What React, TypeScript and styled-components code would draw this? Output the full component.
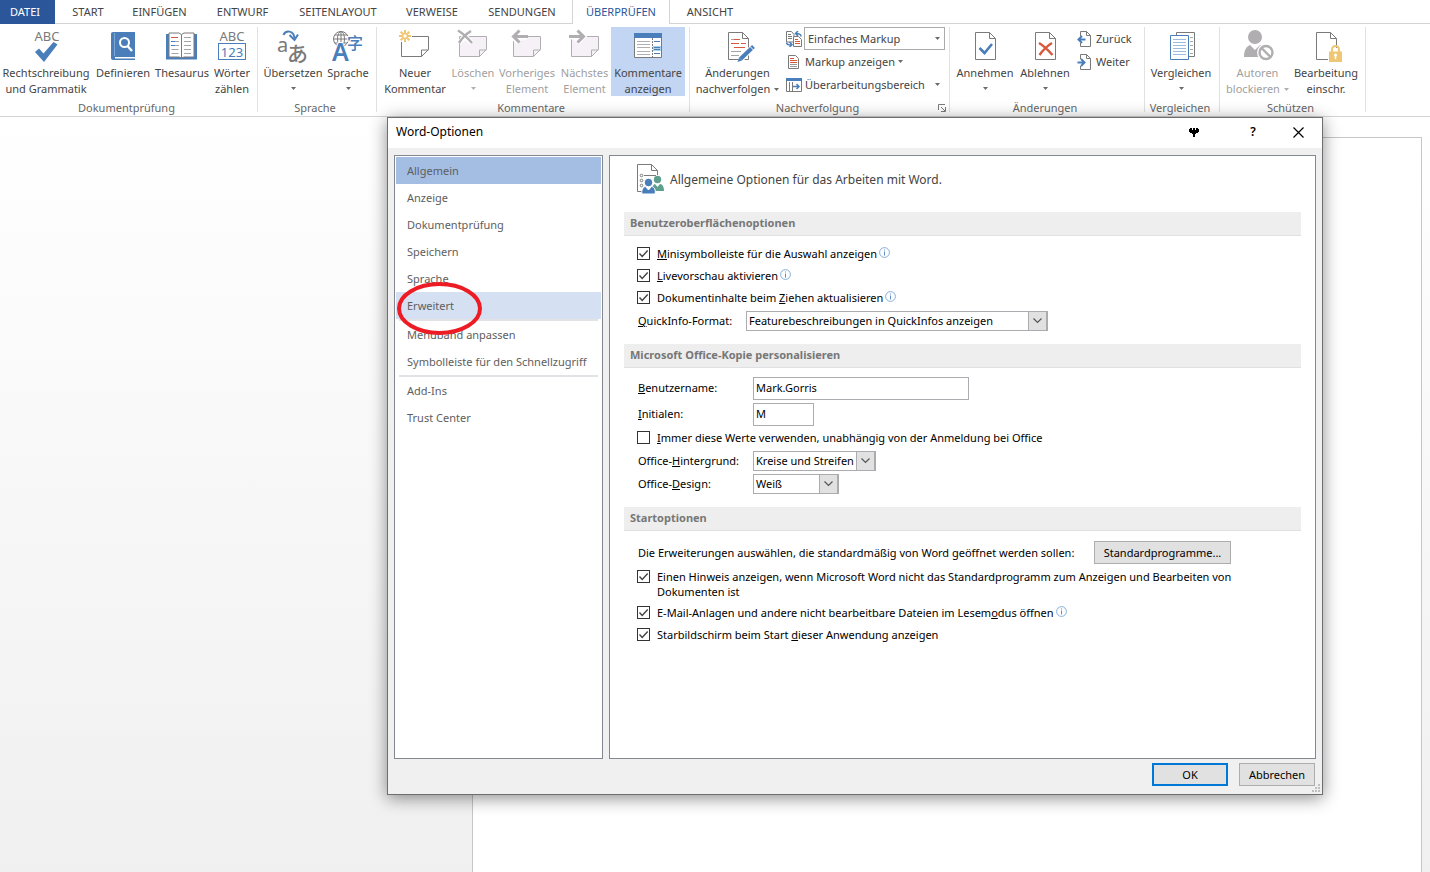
import React, { useId } from "react";
import styled, { createGlobalStyle } from "styled-components";

const BLUE = "#4a7ebb";
const GREY = "#7a7a7a";
const RED = "#d9583b";
const PALE = "#b0aeb0";
const GOLD = "#efc674";

const GlobalStyle = createGlobalStyle`
  *, *::before, *::after { box-sizing: border-box; }
  body {
    margin: 0;
    background: #fff;
    color: #444;
    font: 11px/16px "Noto Sans", "Open Sans", sans-serif;
  }
  button, input, select { font: inherit; color: inherit; margin: 0; }
`;

/* ---------- shell ---------- */

const Screen = styled.div`
  position: relative;
  display: flex;
  flex-direction: column;
  min-height: 100vh;
  overflow: hidden;
`;

const TabBar = styled.nav`
  display: flex;
  height: 24px;
  border-bottom: 1px solid #d4d4d4;
`;

const Tab = styled.button<{ $width: number; $kind?: "file" | "active" }>`
  flex: none;
  width: ${(p) => p.$width}px;
  height: 24px;
  padding: 0 0 1px;
  border: 0;
  white-space: nowrap;
  background: ${(p) => (p.$kind === "file" ? "#2b579a" : p.$kind === "active" ? "#fff" : "transparent")};
  color: ${(p) => (p.$kind === "file" ? "#fff" : p.$kind === "active" ? "#2b579a" : "#444")};
  ${(p) => p.$kind === "file" && "margin-right: 3px; padding-right: 5px;"}
  ${(p) => p.$kind === "active" && "border: solid #d4d4d4; border-width: 0 1px;"}
`;

const Ribbon = styled.div`
  display: flex;
  height: 93px;
  padding: 3px 0 4px;
  border-bottom: 1px solid #d4d4d4;
`;

const Group = styled.section<{ $width: number; $pad?: number }>`
  flex: none;
  display: flex;
  flex-direction: column;
  justify-content: space-between;
  width: ${(p) => p.$width}px;
  padding-left: ${(p) => p.$pad ?? 0}px;
  border-right: 1px solid #e1e1e1;
`;

const GroupItems = styled.div`
  display: flex;
`;

const GroupLabel = styled.div<{ $pad?: number }>`
  position: relative;
  margin-left: -${(p) => p.$pad ?? 0}px;
  padding-right: 4px;
  line-height: 8px;
  text-align: center;
  color: #666;
`;

const Launcher = styled.button`
  position: absolute;
  right: 3px;
  bottom: 0;
  display: flex;
  padding: 0;
  border: 0;
  background: none;
`;

const BigButton = styled.button<{ $width: number; $on?: boolean }>`
  flex: none;
  display: flex;
  flex-direction: column;
  align-items: center;
  width: ${(p) => p.$width}px;
  height: 69px;
  padding: 2px 0 0;
  border: 0;
  background: ${(p) => (p.$on ? "#c2d5f2" : "transparent")};
  color: #444;
  white-space: nowrap;
  &:disabled { color: #a0a0a0; }
  > svg { flex: none; margin-bottom: 2px; }
`;

const Line = styled.span`
  display: flex;
  align-items: center;
  gap: 4px;
  height: 16px;
`;

const SmallStack = styled.div<{ $left: number }>`
  display: flex;
  flex-direction: column;
  padding-left: ${(p) => p.$left}px;
`;

const SmallRow = styled.div`
  display: flex;
  align-items: center;
  gap: 2px;
  height: 23px;
`;

const SmallButton = styled.button<{ $width?: number }>`
  display: flex;
  align-items: center;
  gap: 3px;
  height: 23px;
  width: ${(p) => (p.$width ? `${p.$width}px` : "auto")};
  padding: 0;
  border: 0;
  background: none;
  white-space: nowrap;
  > svg { flex: none; }
  > svg:last-child:not(:first-child) { margin-left: ${(p) => (p.$width ? "auto" : "0")}; }
`;

const RibbonCombo = styled.span`
  display: grid;
  align-items: center;
  width: 141px;
  > * { grid-area: 1 / 1; }
  > svg { justify-self: end; margin-right: 5px; pointer-events: none; }
  select {
    appearance: none;
    width: 100%;
    height: 23px;
    padding: 0 16px 0 3px;
    border: 1px solid #ababab;
    border-radius: 0;
    background: #fff;
  }
`;

const Workspace = styled.main`
  flex: 1;
  display: flex;
  padding: 20px 8px 0 472px;
  background: linear-gradient(#fff, #f0f0f0);
`;

const Sheet = styled.div`
  flex: 1;
  border: 1px solid #c6c6c6;
  border-bottom: 0;
  background: #fff;
`;

/* ---------- dialog ---------- */

const Dialog = styled.section`
  position: absolute;
  left: 387px;
  top: 117px;
  display: flex;
  flex-direction: column;
  width: 936px;
  border: 1px solid #6e6e72;
  background: #f0f0f0;
  color: #000;
  box-shadow: 0 3px 16px rgba(0, 0, 0, 0.45);
`;

const TitleBar = styled.header`
  display: flex;
  align-items: center;
  height: 30px;
  padding: 0 17px 2px 8px;
  background: #fff;
  h1 { flex: 1; margin: 0; font-size: 12px; font-weight: 400; }
`;

const TitleButton = styled.button<{ $gap?: number }>`
  display: flex;
  justify-content: center;
  width: 14px;
  margin-left: ${(p) => p.$gap ?? 0}px;
  padding: 0;
  border: 0;
  background: none;
  font-size: 12px;
  font-weight: 600;
`;

const Panels = styled.div`
  display: flex;
  gap: 6px;
  padding: 7px 6px 4px;
`;

const Categories = styled.nav`
  flex: none;
  width: 209px;
  height: 604px;
  padding: 1px;
  border: 1px solid #828790;
  background: #fff;
`;

const Category = styled.button<{ $state?: "selected" | "hover" }>`
  display: block;
  width: 100%;
  height: 27px;
  padding: 0 0 0 11px;
  border: 0;
  text-align: left;
  white-space: nowrap;
  color: #5e5e5e;
  background: ${(p) => (p.$state === "selected" ? "#a3bde3" : p.$state === "hover" ? "#d5e1f2" : "#fff")};
`;

const Separator = styled.hr`
  height: 2px;
  margin: 0 3px;
  border: 0;
  background: #e1e1e6;
`;

const Content = styled.div`
  flex: 1;
  min-width: 0;
  padding: 8px 14px 0;
  border: 1px solid #828790;
  background: #fff;
`;

const Intro = styled.div`
  display: flex;
  align-items: center;
  gap: 5px;
  height: 31px;
  margin: 0 0 17px 13px;
  font-size: 12px;
  color: #444;
`;

const SectionTitle = styled.h2`
  height: 24px;
  margin: 0;
  padding-left: 6px;
  border-bottom: 1px solid #e1e1e4;
  background: #eee;
  color: #777;
  font-size: 11px;
  font-weight: 700;
  line-height: 22px;
`;

const Fields = styled.div<{ $top: number; $bottom?: number }>`
  padding: ${(p) => p.$top}px 0 ${(p) => p.$bottom ?? 0}px 13px;
`;

const CheckLabel = styled.label<{ $height: number; $top?: number }>`
  display: flex;
  align-items: flex-start;
  gap: 7px;
  height: ${(p) => p.$height}px;
  padding-top: ${(p) => p.$top ?? 0}px;
  line-height: 15px;
`;

const Box = styled.span`
  flex: none;
  display: grid;
  width: 13px;
  height: 13px;
  margin-top: 1px;
  > * { grid-area: 1 / 1; }
  input {
    appearance: none;
    width: 13px;
    height: 13px;
    border: 1px solid #333;
    background: #fff;
  }
  svg { visibility: hidden; pointer-events: none; }
  input:checked + svg { visibility: visible; }
`;

const CheckText = styled.span`
  max-width: 600px;
  > svg { margin-left: 2px; }
`;

const FieldRow = styled.div<{ $height: number; $label: number }>`
  display: flex;
  align-items: center;
  height: ${(p) => p.$height}px;
  padding-left: 1px;
  white-space: nowrap;
  > label { flex: none; width: ${(p) => p.$label}px; }
`;

const TextInput = styled.input<{ $width: number }>`
  width: ${(p) => p.$width}px;
  height: 23px;
  padding: 0 2px 2px;
  border: 1px solid #ababb0;
  background: #fff;
`;

const Combo = styled.span<{ $width: number }>`
  display: grid;
  width: ${(p) => p.$width}px;
  > * { grid-area: 1 / 1; }
  select {
    appearance: none;
    width: 100%;
    height: 20px;
    padding: 0 20px 0 2px;
    border: 1px solid #ababb0;
    border-radius: 0;
    background: #fff;
  }
`;

const ComboArrow = styled.span`
  display: flex;
  align-items: center;
  justify-content: center;
  justify-self: end;
  width: 20px;
  height: 20px;
  border: 1px solid #ababb0;
  border-right-width: 2px;
  background: #e1e1e1;
  pointer-events: none;
`;

const PushButton = styled.button<{ $width: number; $primary?: boolean }>`
  width: ${(p) => p.$width}px;
  height: 23px;
  padding: 0;
  border: ${(p) => (p.$primary ? "2px solid #0078d7" : "1px solid #adadad")};
  background: #e1e1e1;
  white-space: nowrap;
`;

const ExtensionRow = styled.div`
  display: flex;
  align-items: center;
  gap: 14px;
  height: 23px;
  margin-bottom: 5px;
  padding-left: 1px;
  white-space: nowrap;
  > span { width: 442px; }
`;

const Footer = styled.footer`
  display: flex;
  justify-content: flex-end;
  gap: 11px;
  height: 31px;
  padding-right: 7px;
`;

const Grip = styled.svg`
  position: absolute;
  right: 2px;
  bottom: 2px;
`;

const Marker = styled.svg`
  position: absolute;
  left: 8px;
  top: 162px;
  pointer-events: none;
`;

/* ---------- icons ---------- */

const Big = ({ children }: { children: React.ReactNode }) => (
  <svg width="32" height="34" viewBox="0 0 32 34" fill="none" overflow="visible" aria-hidden="true">
    {children}
  </svg>
);
const Small = ({ children }: { children: React.ReactNode }) => (
  <svg width="16" height="16" viewBox="0 0 16 16" fill="none" aria-hidden="true">
    {children}
  </svg>
);
const Caret = ({ pale }: { pale?: boolean }) => (
  <svg width="5" height="3" viewBox="0 0 5 3" aria-hidden="true">
    <path d="M0 0h5L2.5 3z" fill={pale ? PALE : "#6a6a6a"} />
  </svg>
);

const SpellIcon = () => (
  <Big>
    <text x="17" y="12" textAnchor="middle" fontSize="13" fill={GREY}>ABC</text>
    <path d="M5 23l4-3.500 4.500 5L23.500 13l4 2.500-13.500 17.500z" fill={BLUE} />
  </Big>
);
const DefineIcon = () => (
  <Big>
    <path d="M6 3h22v25H8v1.500h20V31H6c-1.200 0-2-.8-2-2V5c0-1.200.8-2 2-2z" fill={BLUE} />
    <path d="M7.500 4v23" stroke="#7fa5d2" />
    <circle cx="17.500" cy="13.500" r="4.500" stroke="#fff" strokeWidth="2" />
    <path d="M20.500 17l4.500 5" stroke="#fff" strokeWidth="2.500" />
  </Big>
);
const ThesaurusIcon = () => (
  <Big>
    <path d="M0 5h31v25.500H0z" fill={BLUE} />
    <path d="M3 4h10l2.500 1.500L18 4h10v24H18l-2.500 1L13 28H3z" fill="#fff" stroke={GREY} />
    <path d="M15.500 6v23" stroke={GREY} />
    <path d="M18 8.500h7M18 12.500h7M18 16.500h7M18 20.500h7M18 24.500h7M5.500 20.500h7M5.500 24.500h7M9 12.500h4M9 16.500h4" stroke="#a5a5a5" />
    <path d="M5 8.500h7" stroke={RED} />
    <path d="M5 12.500h4M5 16.500h4" stroke={BLUE} />
  </Big>
);
const CountIcon = () => (
  <Big>
    <text x="16" y="12" textAnchor="middle" fontSize="13" fill={GREY}>ABC</text>
    <rect x="2.500" y="14.500" width="27" height="16" stroke={BLUE} />
    <text x="16" y="28" textAnchor="middle" fontSize="13" fill={BLUE}>123</text>
  </Big>
);
const TranslateIcon = () => (
  <Big>
    <text x="0" y="23" fontSize="20" fill={GREY}>a</text>
    <text x="10" y="32" fontSize="21" fontWeight="500" fill={GREY} fontFamily="Noto Sans CJK JP, sans-serif">あ</text>
    <path d="M6.500 6c2-5 10-5 11 3" stroke={BLUE} strokeWidth="2" />
    <path d="M12.500 6l5 5 3.500-5.500" stroke={BLUE} strokeWidth="2" />
  </Big>
);
const LanguageIcon = () => (
  <Big>
    <circle cx="9" cy="10" r="7.500" stroke={GREY} />
    <ellipse cx="9" cy="10" rx="3.500" ry="7.500" stroke={GREY} />
    <path d="M1.500 10h15M3 6h12M3 14h12M9 2.500v15" stroke={GREY} />
    <text x="0" y="32" fontSize="25" fontWeight="600" fill={BLUE} stroke="#fff" strokeWidth="2" paintOrder="stroke">A</text>
    <text x="15" y="20" fontSize="16" fontWeight="500" fill={BLUE} fontFamily="Noto Sans CJK SC, sans-serif" stroke="#fff" strokeWidth="2" paintOrder="stroke">字</text>
  </Big>
);
const Note = ({ pale }: { pale?: boolean }) => (
  <path
    d="M2.500 7.500h27v13l-7 7h-20zM22.500 27.500v-6.500h7"
    fill={pale ? "#f5f1f7" : "#fff"}
    stroke={pale ? PALE : GREY}
  />
);
const NewNoteIcon = () => (
  <Big>
    <Note />
    <path d="M0 0h13v13H0z" fill="#fff" />
    <circle cx="6" cy="7" r="2.500" stroke={GOLD} strokeWidth="1.500" />
    <path d="M6 1v3M6 10v3M0 7h3M9 7h3M1.700 2.700l2 2M8.300 9.300l2 2M10.300 2.700l-2 2M3.700 9.300l-2 2" stroke={GOLD} strokeWidth="2" />
  </Big>
);
const DeleteNoteIcon = () => (
  <Big>
    <Note pale />
    <path d="M1 1.500l14 12.500M14 2L2 14" stroke="#fff" strokeWidth="5" />
    <path d="M1 1.500c5 3 10 8 14 12.500M14 2C9 5 5 9 2 14" stroke={PALE} strokeWidth="2.500" />
  </Big>
);
const PrevNoteIcon = () => (
  <Big>
    <Note pale />
    <path d="M2 7.500h14M8 1.500l-6 6 6 6" stroke="#fff" strokeWidth="6" />
    <path d="M2.500 7.500H17M8.500 1.500l-6 6 6 6" stroke={PALE} strokeWidth="3" />
  </Big>
);
const NextNoteIcon = () => (
  <Big>
    <Note pale />
    <path d="M0 7.500h14M8 1.500l6 6-6 6" stroke="#fff" strokeWidth="6" />
    <path d="M0 7.500h14.500M8.500 1.500l6 6-6 6" stroke={PALE} strokeWidth="3" />
  </Big>
);
const ShowNotesIcon = () => (
  <Big>
    <path d="M2.500 5h27v23.500h-27z" fill="#fff" stroke={GREY} />
    <path d="M2 4h28v5H2z" fill={BLUE} />
    <path d="M5 12.500h13M5 15.500h13M5 18.500h13M5 22.500h13M5 25.500h13" stroke="#b0b0b0" />
    <path d="M20.500 9v19" stroke={GREY} strokeDasharray="2 1" />
    <path d="M21 17h8v5h-8z" fill="#a9d3ea" />
    <path d="M22 12.500h6M22 18.500h6M22 20.500h6M22 24.500h6" stroke={BLUE} />
  </Big>
);
const PageShape = () => (
  <path d="M6.500 3.500h14l6 6v21h-20zM20.500 3.500v6h6" fill="#fff" stroke={GREY} />
);
const TrackIcon = () => (
  <Big>
    <PageShape />
    <path d="M9 10.500h7M9 22.500h10M9 26.500h8" stroke="#a5a5a5" />
    <path d="M12 10.500h6M9 14.500h8M19 14.500h5M12 18.500h4M16 18.500h7" stroke={RED} />
    <path d="M32.500 16.500L17.500 31.500" stroke="#fff" strokeWidth="6" />
    <path d="M31.500 17.500L18.500 30" stroke={BLUE} strokeWidth="4" />
    <path d="M28 17.500l3.500 3.500" stroke="#fff" />
    <path d="M17 28.500l3 3-4.500 1.500z" fill={BLUE} />
  </Big>
);
const AcceptIcon = () => (
  <Big>
    <PageShape />
    <path d="M10.500 19l5 5 7.500-9" stroke={BLUE} strokeWidth="2.600" />
  </Big>
);
const RejectIcon = () => (
  <Big>
    <PageShape />
    <path d="M10 14c5 3 9 7 13.500 12M23 14c-5 3-9 7-12.500 12" stroke={RED} strokeWidth="2.400" />
  </Big>
);
const CompareIcon = () => (
  <Big>
    <path d="M11.500 3.500h18v24h-18z" fill="#fff" stroke={GREY} />
    <path d="M25 8.500h3M25 12.500h3M25 16.500h3M25 20.500h3M25 24.500h3" stroke="#a5a5a5" />
    <path d="M5.500 6.500h18v24h-18z" fill="#fff" stroke={BLUE} />
    <path d="M8 10.500h13M8 13.500h13M8 16.500h13M8 19.500h13M8 22.500h13M8 25.500h13" stroke="#9dbbdd" />
  </Big>
);
const BlockIcon = () => (
  <Big>
    <circle cx="13" cy="8" r="7" fill={PALE} />
    <path d="M2 28c0-7 2-10 6-12l5 5 5-5c4 2 6 5 6 12z" fill={PALE} />
    <circle cx="24" cy="23.500" r="9" fill="#fff" />
    <circle cx="24" cy="23.500" r="6.500" stroke={PALE} strokeWidth="2.400" />
    <path d="M19.500 19l9 9" stroke={PALE} strokeWidth="2.400" />
  </Big>
);
const RestrictIcon = () => (
  <Big>
    <PageShape />
    <path d="M18 19h15v14H18z" fill="#fff" />
    <path d="M22 23v-2.500a3.500 3.500 0 0 1 7 0V23" stroke={GOLD} strokeWidth="2" />
    <path d="M19 22.500h13V33H19z" fill={GOLD} />
    <path d="M25.500 25.500v4.500" stroke="#fff" strokeWidth="1.500" />
    <circle cx="25.500" cy="26" r="1.500" fill="#fff" />
  </Big>
);
const SwapIcon = () => (
  <Small>
    <path d="M.5.500h5l2.500 3v7.500H.5zM2 3.500h3M2 5.500h4M2 7.500h4" stroke={GREY} />
    <path d="M7.500 5.500h5l3 3v7h-8z" fill="#fff" stroke={GREY} />
    <path d="M9 8.500h3M9 10.500h5M9 12.500h5" stroke={RED} />
    <path d="M15 5.500c0-2-2-3-5-3M12 0L9.500 2.500 12 5M.5 11.500c0 2 2 2.500 4.500 2.500M3.500 11L6 13.700 3.500 16" stroke={BLUE} strokeWidth="1.500" />
  </Small>
);
const ListIcon = () => (
  <Small>
    <path d="M2.500 1.500h7l3 3v10h-10z" stroke={GREY} />
    <path d="M4 4.500h4M4 6.500h7M4 8.500h7" stroke={RED} />
    <path d="M4 10.500h7M4 12.500h7" stroke="#999" />
  </Small>
);
const PaneIcon = () => (
  <Small>
    <path d="M.5 2.500h15v12H.5z" stroke={GREY} />
    <path d="M0 1h16v3H0z" fill={BLUE} />
    <path d="M3.500 5v9" stroke={RED} />
    <path d="M6.500 5v9" stroke={GREY} />
    <path d="M7 9.500h6M10.500 7l2.500 2.500-2.500 2.500" stroke={BLUE} strokeWidth="1.500" />
  </Small>
);
const StepIcon = ({ back }: { back?: boolean }) => (
  <Small>
    <path d="M3.500 5V.5h6l4 4v11h-10V12M9.500.500v4h4" stroke={GREY} />
    {back ? (
      <path d="M1.500 8.500h7M5 5l-3.500 3.500L5 12" stroke={BLUE} strokeWidth="2" />
    ) : (
      <path d="M.5 8.500h7M4 5l3.500 3.500L4 12" stroke={BLUE} strokeWidth="2" />
    )}
  </Small>
);
const InfoIcon = () => (
  <svg width="11" height="11" viewBox="0 0 11 11" fill="none" role="img" aria-label="Info">
    <circle cx="5.500" cy="5.500" r="4.900" stroke="#86aedb" />
    <path d="M5.500 4.500v4M5.500 2.500v1" stroke="#5d8fcb" />
  </svg>
);
const PeopleIcon = () => (
  <svg width="28" height="31" viewBox="0 0 28 31" fill="none" aria-hidden="true">
    <path d="M5 27.500H.5V.5h14l6 6V11M14.500.500v6h6M7 11.500h12" stroke={GREY} />
    <circle cx="4.500" cy="11.500" r="1.300" stroke={GREY} />
    <circle cx="4.500" cy="16.500" r="1.300" stroke={GREY} />
    <circle cx="4.500" cy="21.500" r="1.300" stroke={GREY} />
    <circle cx="20.500" cy="15.500" r="3.700" fill="#5f9f8e" />
    <path d="M15 27c0-4 1-6.500 3-7l2.500 3 2.500-3c3 .5 4 3 4 7z" fill="#5f9f8e" />
    <path d="M5 30c-1-4 1-7 3.500-7.500L11.500 26l3-3.500C17.500 23 19 26 18 30z" fill={BLUE} stroke="#fff" />
    <circle cx="11.500" cy="18.500" r="4.200" fill={BLUE} stroke="#fff" />
  </svg>
);

/* ---------- composed controls ---------- */

type BigProps = {
  width: number;
  icon: React.ReactNode;
  first: string;
  second?: string;
  menu?: boolean;
  disabled?: boolean;
  on?: boolean;
};

const Command = ({ width, icon, first, second, menu, disabled, on }: BigProps) => (
  <BigButton type="button" $width={width} $on={on} disabled={disabled}>
    {icon}
    <Line>{first}</Line>
    <Line>
      {second}
      {menu && <Caret pale={disabled} />}
    </Line>
  </BigButton>
);

type CheckProps = { height: number; top?: number; checked?: boolean; info?: boolean; children: React.ReactNode };

const Check = ({ height, top, checked, info, children }: CheckProps) => (
  <CheckLabel $height={height} $top={top}>
    <Box>
      <input type="checkbox" defaultChecked={checked} />
      <svg width="13" height="13" viewBox="0 0 13 13" fill="none" aria-hidden="true">
        <path d="M2.500 6.500l2.700 3 5.500-6" stroke="#444" strokeWidth="1.400" />
      </svg>
    </Box>
    <CheckText>
      {children}
      {info && <InfoIcon />}
    </CheckText>
  </CheckLabel>
);

type SelectProps = { row: number; label: number; width: number; value: string; children: React.ReactNode };

const SelectField = ({ row, label, width, value, children }: SelectProps) => {
  const id = useId();
  return (
    <FieldRow $height={row} $label={label}>
      <label htmlFor={id}>{children}</label>
      <Combo $width={width}>
        <select id={id} defaultValue={value}>
          <option>{value}</option>
        </select>
        <ComboArrow>
          <svg width="9" height="6" viewBox="0 0 9 6" fill="none" aria-hidden="true">
            <path d="M.5.500l4 4 4-4" stroke="#555" strokeWidth="1.200" />
          </svg>
        </ComboArrow>
      </Combo>
    </FieldRow>
  );
};

type InputProps = { row: number; width: number; value: string; children: React.ReactNode };

const InputField = ({ row, width, value, children }: InputProps) => {
  const id = useId();
  return (
    <FieldRow $height={row} $label={115}>
      <label htmlFor={id}>{children}</label>
      <TextInput id={id} $width={width} defaultValue={value} />
    </FieldRow>
  );
};

/* ---------- page ---------- */

const RibbonArea = () => (
  <>
    <TabBar>
      <Tab $width={55} $kind="file">DATEI</Tab>
      <Tab $width={60}>START</Tab>
      <Tab $width={83}>EINFÜGEN</Tab>
      <Tab $width={83}>ENTWURF</Tab>
      <Tab $width={108}>SEITENLAYOUT</Tab>
      <Tab $width={80}>VERWEISE</Tab>
      <Tab $width={100}>SENDUNGEN</Tab>
      <Tab $width={98} $kind="active">ÜBERPRÜFEN</Tab>
      <Tab $width={80}>ANSICHT</Tab>
    </TabBar>
    <Ribbon>
      <Group $width={258}>
        <GroupItems>
          <Command width={92} icon={<SpellIcon />} first="Rechtschreibung" second="und Grammatik" />
          <Command width={62} icon={<DefineIcon />} first="Definieren" />
          <Command width={56} icon={<ThesaurusIcon />} first="Thesaurus" />
          <Command width={44} icon={<CountIcon />} first="Wörter" second="zählen" />
        </GroupItems>
        <GroupLabel>Dokumentprüfung</GroupLabel>
      </Group>
      <Group $width={119} $pad={5}>
        <GroupItems>
          <Command width={60} icon={<TranslateIcon />} first="Übersetzen" menu />
          <Command width={50} icon={<LanguageIcon />} first="Sprache" menu />
        </GroupItems>
        <GroupLabel $pad={5}>Sprache</GroupLabel>
      </Group>
      <Group $width={313} $pad={3}>
        <GroupItems>
          <Command width={70} icon={<NewNoteIcon />} first="Neuer" second="Kommentar" />
          <Command width={46} icon={<DeleteNoteIcon />} first="Löschen" menu disabled />
          <Command width={62} icon={<PrevNoteIcon />} first="Vorheriges" second="Element" disabled />
          <Command width={53} icon={<NextNoteIcon />} first="Nächstes" second="Element" disabled />
          <Command width={74} icon={<ShowNotesIcon />} first="Kommentare" second="anzeigen" on />
        </GroupItems>
        <GroupLabel $pad={3}>Kommentare</GroupLabel>
      </Group>
      <Group $width={260} $pad={2}>
        <GroupItems>
          <Command width={91} icon={<TrackIcon />} first="Änderungen" second="nachverfolgen" menu />
          <SmallStack $left={3}>
            <SmallRow>
              <SwapIcon />
              <RibbonCombo>
                <select aria-label="Markup" defaultValue="Einfaches Markup">
                  <option>Einfaches Markup</option>
                </select>
                <Caret />
              </RibbonCombo>
            </SmallRow>
            <SmallButton type="button">
              <ListIcon />Markup anzeigen<Caret />
            </SmallButton>
            <SmallButton type="button" $width={154}>
              <PaneIcon />Überarbeitungsbereich<Caret />
            </SmallButton>
          </SmallStack>
        </GroupItems>
        <GroupLabel $pad={2}>
          Nachverfolgung
          <Launcher type="button" aria-label="Nachverfolgungsoptionen">
            <svg width="8" height="8" viewBox="0 0 8 8" fill="none">
              <path d="M.5 6V.5H7M3 3l4 4M7.500 3v4.500H3" stroke={GREY} />
            </svg>
          </Launcher>
        </GroupLabel>
      </Group>
      <Group $width={195} $pad={4}>
        <GroupItems>
          <Command width={62} icon={<AcceptIcon />} first="Annehmen" menu />
          <Command width={58} icon={<RejectIcon />} first="Ablehnen" menu />
          <SmallStack $left={3}>
            <SmallButton type="button"><StepIcon back />Zurück</SmallButton>
            <SmallButton type="button"><StepIcon />Weiter</SmallButton>
          </SmallStack>
        </GroupItems>
        <GroupLabel $pad={4}>Änderungen</GroupLabel>
      </Group>
      <Group $width={75} $pad={3}>
        <GroupItems>
          <Command width={66} icon={<CompareIcon />} first="Vergleichen" menu />
        </GroupItems>
        <GroupLabel $pad={3}>Vergleichen</GroupLabel>
      </Group>
      <Group $width={146} $pad={4}>
        <GroupItems>
          <Command width={67} icon={<BlockIcon />} first="Autoren" second="blockieren" menu disabled />
          <Command width={70} icon={<RestrictIcon />} first="Bearbeitung" second="einschr." />
        </GroupItems>
        <GroupLabel $pad={4}>Schützen</GroupLabel>
      </Group>
    </Ribbon>
  </>
);

const OptionsDialog = () => (
  <Dialog role="dialog" aria-labelledby="dialog-title">
    <TitleBar>
      <h1 id="dialog-title">Word-Optionen</h1>
      <TitleButton type="button" aria-label="Ziehen">
        <svg width="10" height="11" viewBox="0 0 10 11" aria-hidden="true">
          <path d="M1 1h2v2h1V1h2v2h1V1h2v1h1v3H9v1H7v1H6v3H4V7H3V6H1V5H0V2h1z" fill="#000" />
        </svg>
      </TitleButton>
      <TitleButton type="button" aria-label="Hilfe" $gap={45}>?</TitleButton>
      <TitleButton type="button" aria-label="Schließen" $gap={31}>
        <svg width="11" height="11" viewBox="0 0 11 11" aria-hidden="true">
          <path d="M.5.500l10 10M10.500.500l-10 10" stroke="#000" strokeWidth="1.200" />
        </svg>
      </TitleButton>
    </TitleBar>
    <Panels>
      <Categories>
        <Category $state="selected">Allgemein</Category>
        <Category>Anzeige</Category>
        <Category>Dokumentprüfung</Category>
        <Category>Speichern</Category>
        <Category>Sprache</Category>
        <Category $state="hover">Erweitert</Category>
        <Separator />
        <Category>Menüband anpassen</Category>
        <Category>Symbolleiste für den Schnellzugriff</Category>
        <Separator />
        <Category>Add-Ins</Category>
        <Category>Trust Center</Category>
      </Categories>
      <Content>
        <Intro>
          <PeopleIcon />
          Allgemeine Optionen für das Arbeiten mit Word.
        </Intro>
        <SectionTitle>Benutzeroberflächenoptionen</SectionTitle>
        <Fields $top={10} $bottom={12}>
          <Check height={22} checked info><u>M</u>inisymbolleiste für die Auswahl anzeigen</Check>
          <Check height={22} checked info><u>L</u>ivevorschau aktivieren</Check>
          <Check height={20} checked info>Dokumentinhalte beim <u>Z</u>iehen aktualisieren</Check>
          <SelectField row={22} label={108} width={302} value="Featurebeschreibungen in QuickInfos anzeigen">
            <u>Q</u>uickInfo-Format:
          </SelectField>
        </Fields>
        <SectionTitle>Microsoft Office-Kopie personalisieren</SectionTitle>
        <Fields $top={7} $bottom={12}>
          <InputField row={26} width={216} value="Mark.Gorris"><u>B</u>enutzername:</InputField>
          <InputField row={26} width={61} value="M"><u>I</u>nitialen:</InputField>
          <Check height={22} top={3}><u>I</u>mmer diese Werte verwenden, unabhängig von der Anmeldung bei Office</Check>
          <SelectField row={23} label={115} width={123} value="Kreise und Streifen">Office-<u>H</u>intergrund:</SelectField>
          <SelectField row={23} label={115} width={86} value="Weiß">Office-<u>D</u>esign:</SelectField>
        </Fields>
        <SectionTitle>Startoptionen</SectionTitle>
        <Fields $top={10}>
          <ExtensionRow>
            <span>Die Erweiterungen auswählen, die standardmäßig von Word geöffnet werden sollen:</span>
            <PushButton type="button" $width={137}>Standardprogramme...</PushButton>
          </ExtensionRow>
          <Check height={36} checked>
            Einen Hinweis anzeigen, wenn Microsoft Word nicht das Standardprogramm zum Anzeigen und Bearbeiten von Dokumenten ist
          </Check>
          <Check height={22} checked info>E-Mail-Anlagen und andere nicht bearbeitbare Dateien im Lesem<u>o</u>dus öffnen</Check>
          <Check height={22} checked>Starbildschirm beim Start <u>d</u>ieser Anwendung anzeigen</Check>
        </Fields>
      </Content>
    </Panels>
    <Footer>
      <PushButton type="button" $width={76} $primary>OK</PushButton>
      <PushButton type="button" $width={76}>Abbrechen</PushButton>
    </Footer>
    <Grip width="8" height="8" viewBox="0 0 8 8" aria-hidden="true">
      <path d="M6 0h2v2H6zM3 3h2v2H3zM6 3h2v2H6zM0 6h2v2H0zM3 6h2v2H3zM6 6h2v2H6z" fill="#bfbfbf" />
    </Grip>
    <Marker width="88" height="56" viewBox="0 0 88 56" fill="none" aria-hidden="true">
      <ellipse cx="43.500" cy="28.500" rx="40.500" ry="24.500" stroke="#ed1c24" strokeWidth="4" />
    </Marker>
  </Dialog>
);

export default function App() {
  return (
    <Screen>
      <GlobalStyle />
      <RibbonArea />
      <Workspace>
        <Sheet />
      </Workspace>
      <OptionsDialog />
    </Screen>
  );
}
